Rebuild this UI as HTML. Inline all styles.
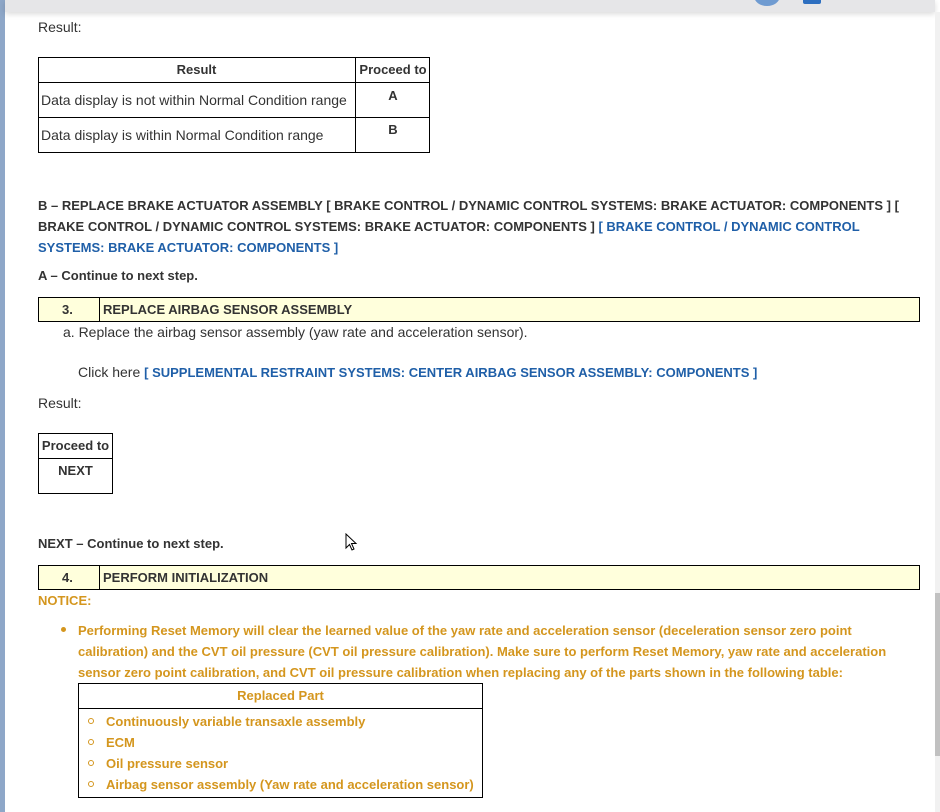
<!DOCTYPE html>
<html><head><meta charset="utf-8"><style>
*{margin:0;padding:0;box-sizing:border-box}
body{width:940px;height:812px;overflow:hidden;background:#fff;font-family:"Liberation Sans",Arial,sans-serif;font-size:14px;color:#333;position:relative}
.a{position:absolute;white-space:nowrap}
.b{font-weight:bold;font-size:13px}
.blue{color:#1f5fa8;font-weight:bold;font-size:13px}
.gold{color:#d4961e;font-weight:bold;font-size:13px}
.box{position:absolute;border:1px solid #000}
.yel{background:#ffffdc}
.c{position:absolute;left:88px;width:6px;height:6px;border:1.3px solid #d4961e;border-radius:50%}
</style></head><body>
<div class="a" style="left:0;top:0;width:5px;height:812px;background:#8ea7c8"></div>
<div class="a" style="left:5px;top:0;width:930px;height:12px;background:#e6e6e8;box-shadow:0 2px 6px rgba(0,0,0,.15)"></div>
<div class="a" style="left:754px;top:-14px;width:26px;height:20px;border-radius:50%;background:#6f9bd1"></div>
<div class="a" style="left:803px;top:0;width:18px;height:4px;background:#2d6fc0;border-radius:0 0 2px 2px"></div>
<div class="a" style="left:935px;top:12px;width:5px;height:800px;background:#f1f1f1"></div>
<div class="a" style="left:935px;top:593px;width:5px;height:163px;background:#c1c1c1"></div>

<div class="a" style="left:38px;top:19px">Result:</div>
<div class="box" style="left:38px;top:57px;width:392px;height:96px"></div>
<div class="a" style="left:38px;top:82px;width:392px;height:1px;background:#000"></div>
<div class="a" style="left:38px;top:117px;width:392px;height:1px;background:#000"></div>
<div class="a" style="left:355px;top:57px;width:1px;height:96px;background:#000"></div>
<div class="a b" style="left:38px;top:62px;width:317px;text-align:center">Result</div>
<div class="a b" style="left:356px;top:62px;width:74px;text-align:center">Proceed to</div>
<div class="a" style="left:41px;top:92px">Data display is not within Normal Condition range</div>
<div class="a b" style="left:356px;top:88px;width:74px;text-align:center">A</div>
<div class="a" style="left:41px;top:127px">Data display is within Normal Condition range</div>
<div class="a b" style="left:356px;top:122px;width:74px;text-align:center">B</div>

<div class="a b" style="left:38px;top:195px;line-height:21px">B – REPLACE BRAKE ACTUATOR ASSEMBLY [ BRAKE CONTROL / DYNAMIC CONTROL SYSTEMS: BRAKE ACTUATOR: COMPONENTS ] [<br>BRAKE CONTROL / DYNAMIC CONTROL SYSTEMS: BRAKE ACTUATOR: COMPONENTS ] <span class="blue">[ BRAKE CONTROL / DYNAMIC CONTROL</span><br><span class="blue">SYSTEMS: BRAKE ACTUATOR: COMPONENTS ]</span></div>
<div class="a b" style="left:38px;top:268px">A – Continue to next step.</div>

<div class="box yel" style="left:38px;top:297px;width:882px;height:25px"></div>
<div class="a" style="left:99px;top:297px;width:1px;height:25px;background:#000"></div>
<div class="a b" style="left:62px;top:302px">3.</div>
<div class="a b" style="left:103px;top:302px">REPLACE AIRBAG SENSOR ASSEMBLY</div>
<div class="a" style="left:63px;top:324px">a. Replace the airbag sensor assembly (yaw rate and acceleration sensor).</div>
<div class="a" style="left:78px;top:364px">Click here <span class="blue">[ SUPPLEMENTAL RESTRAINT SYSTEMS: CENTER AIRBAG SENSOR ASSEMBLY: COMPONENTS ]</span></div>
<div class="a" style="left:38px;top:395px">Result:</div>
<div class="box" style="left:38px;top:433px;width:75px;height:61px"></div>
<div class="a" style="left:38px;top:458px;width:75px;height:1px;background:#000"></div>
<div class="a b" style="left:38px;top:438px;width:75px;text-align:center">Proceed to</div>
<div class="a b" style="left:38px;top:463px;width:75px;text-align:center">NEXT</div>
<div class="a b" style="left:38px;top:536px">NEXT – Continue to next step.</div>

<div class="box yel" style="left:38px;top:565px;width:882px;height:25px"></div>
<div class="a" style="left:99px;top:565px;width:1px;height:25px;background:#000"></div>
<div class="a b" style="left:62px;top:570px">4.</div>
<div class="a b" style="left:103px;top:570px">PERFORM INITIALIZATION</div>
<div class="a gold" style="left:38px;top:593px">NOTICE:</div>
<div class="a" style="left:61px;top:627px;width:5px;height:5px;border-radius:50%;background:#d4961e"></div>
<div class="a gold" style="left:78px;top:620px;line-height:21px">Performing Reset Memory will clear the learned value of the yaw rate and acceleration sensor (deceleration sensor zero point<br>calibration) and the CVT oil pressure (CVT oil pressure calibration). Make sure to perform Reset Memory, yaw rate and acceleration<br>sensor zero point calibration, and CVT oil pressure calibration when replacing any of the parts shown in the following table:</div>
<div class="box" style="left:78px;top:683px;width:405px;height:115px"></div>
<div class="a" style="left:78px;top:708px;width:405px;height:1px;background:#000"></div>
<div class="a gold" style="left:78px;top:688px;width:405px;text-align:center">Replaced Part</div>
<div class="c" style="top:718px"></div>
<div class="c" style="top:739px"></div>
<div class="c" style="top:760px"></div>
<div class="c" style="top:781px"></div>
<div class="a gold" style="left:106px;top:711px;line-height:21px">Continuously variable transaxle assembly<br>ECM<br>Oil pressure sensor<br>Airbag sensor assembly (Yaw rate and acceleration sensor)</div>
<svg class="a" style="left:345px;top:533px" width="14" height="20" viewBox="0 0 14 20"><path d="M1 1 L1 15 L4.5 11.5 L7 17 L9 16 L6.5 10.5 L11 10.5 Z" fill="#fff" stroke="#000" stroke-width="1"/></svg>
</body></html>
